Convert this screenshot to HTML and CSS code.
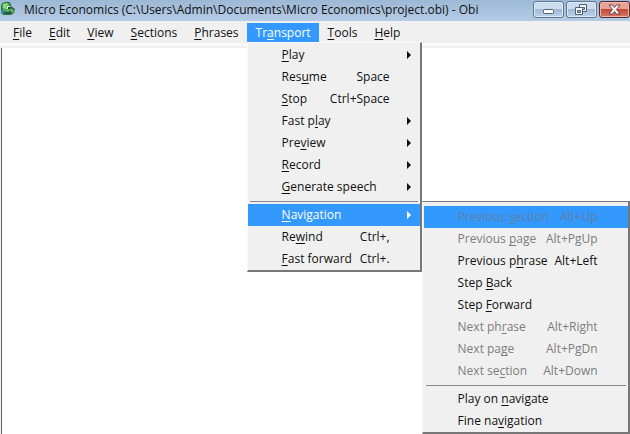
FILE: index.html
```html
<!DOCTYPE html>
<html lang="en">
<head>
<meta charset="utf-8">
<title>Micro Economics - Obi</title>
<link rel="stylesheet" href="styles.css">
</head>
<body>
<div class="window">
  <header class="titlebar">
    <svg class="app-icon" viewBox="0 0 16 16" aria-hidden="true">
      <path fill="#2d7048" d="M1 6Q2 2 6 2Q11 1 11 6L15 9L14 13L11 15H3L1 13Z"/>
      <path fill="#4fb15c" d="M2 6Q3 3 7 3Q10 3 10 7L11 11Q7 13 3 11Z"/>
      <path fill="#8ddc75" d="M3 4L7 3L8 5L6 6L7 9L3 8Z"/>
      <path fill="#e5f7f8" d="M7 6H10V9H7Z"/>
      <path fill="#163f49" d="M8 7H10V9H8ZM4 11Q8 14 11 11V12Q8 15 4 12Z"/>
      <path fill="#3b8a9b" d="M1 10L5 12L3 14L1 13Z"/>
      <path fill="#72b45a" d="M11 9L14 10L13 13L11 12Z"/>
    </svg>
    <h1 class="title">Micro Economics (C:\Users\Admin\Documents\Micro Economics\project.obi) - Obi</h1>
    <div class="controls">
      <button class="control" type="button" aria-label="Minimize">
        <svg viewBox="0 0 30 16" aria-hidden="true"><rect x="9.500" y="7.500" width="10" height="4" rx="1" fill="#fff" stroke="#51606f"/></svg>
      </button>
      <button class="control" type="button" aria-label="Restore">
        <svg viewBox="0 0 30 16" aria-hidden="true"><g fill="#f4f8fc" stroke="#51606f"><path d="M12.500 2.500H19.500V9.500H12.500Z"/><path d="M8.500 5.500H15.500V12.500H8.500Z"/><path fill="#a9c1dc" d="M10.500 8.500H13.500V10.500H10.500ZM15.500 5.500H17.500V7.500H15.500"/></g></svg>
      </button>
      <button class="control control-close" type="button" aria-label="Close">
        <svg viewBox="0 0 30 16" aria-hidden="true"><path d="M9 3H12.500L14.500 5.500L16.500 3H20L16.500 7.500L20 12H16.500L14.500 9.500L12.500 12H9L12.500 7.500Z" fill="#fff" stroke="#6b4450"/></svg>
      </button>
    </div>
  </header>
  <nav class="menubar">
    <button class="top-item" type="button"><u>F</u>ile</button>
    <button class="top-item" type="button"><u>E</u>dit</button>
    <button class="top-item" type="button"><u>V</u>iew</button>
    <button class="top-item" type="button"><u>S</u>ections</button>
    <button class="top-item" type="button"><u>P</u>hrases</button>
    <div class="top-group">
      <button class="top-item top-open" type="button" aria-expanded="true">Tr<u>a</u>nsport</button>
      <div class="menu menu-transport">
        <button class="item has-sub" type="button"><span><u>P</u>lay</span></button>
        <button class="item" type="button"><span>Res<u>u</u>me</span><span>Space</span></button>
        <button class="item" type="button"><span><u>S</u>top</span><span>Ctrl+Space</span></button>
        <button class="item has-sub" type="button"><span>Fast p<u>l</u>ay</span></button>
        <button class="item has-sub" type="button"><span>Pre<u>v</u>iew</span></button>
        <button class="item has-sub" type="button"><span><u>R</u>ecord</span></button>
        <button class="item has-sub" type="button"><span><u>G</u>enerate speech</span></button>
        <hr class="separator">
        <div class="sub-group">
          <button class="item has-sub selected" type="button" aria-expanded="true"><span><u>N</u>avigation</span></button>
          <div class="menu menu-navigation">
            <button class="item selected" type="button" disabled><span>Previous <u>s</u>ection</span><span>Alt+Up</span></button>
            <button class="item" type="button" disabled><span>Previous <u>p</u>age</span><span>Alt+PgUp</span></button>
            <button class="item" type="button"><span>Previous p<u>h</u>rase</span><span>Alt+Left</span></button>
            <button class="item" type="button"><span>Step <u>B</u>ack</span></button>
            <button class="item" type="button"><span>Step <u>F</u>orward</span></button>
            <button class="item" type="button" disabled><span>Next ph<u>r</u>ase</span><span>Alt+Right</span></button>
            <button class="item" type="button" disabled><span>Next pa<u>g</u>e</span><span>Alt+PgDn</span></button>
            <button class="item" type="button" disabled><span>Next se<u>c</u>tion</span><span>Alt+Down</span></button>
            <hr class="separator">
            <button class="item" type="button"><span>Play on <u>n</u>avigate</span></button>
            <button class="item" type="button"><span>Fine na<u>v</u>igation</span></button>
          </div>
        </div>
        <button class="item" type="button"><span>Re<u>w</u>ind</span><span>Ctrl+,</span></button>
        <button class="item" type="button"><span><u>F</u>ast forward</span><span>Ctrl+.</span></button>
      </div>
    </div>
    <button class="top-item" type="button"><u>T</u>ools</button>
    <button class="top-item" type="button"><u>H</u>elp</button>
  </nav>
  <main class="workspace"></main>
</div>
</body>
</html>
```
FILE: styles.css
```css
* { box-sizing: border-box; }

body {
  margin: 0;
  overflow: hidden;
  font: 12px/16px "Open Sans", "Noto Sans", sans-serif;
  color: #111;
  background: #f0f0f0;
}

button {
  margin: 0;
  padding: 0;
  border: 0;
  font: inherit;
  color: inherit;
  background: none;
}

u { text-underline-offset: 2px; text-decoration-skip-ink: none; }

.window {
  display: flex;
  flex-direction: column;
  min-height: 100vh;
}

.titlebar {
  display: flex;
  align-items: flex-start;
  height: 21px;
  background: linear-gradient(#9db8d5, #b5cce5);
}

.app-icon { width: 16px; height: 16px; flex: none; }

.title {
  flex: 1;
  margin: 0 0 0 8px;
  padding-top: 2px;
  font-size: 12px;
  line-height: 16px;
  font-weight: 400;
  white-space: nowrap;
}

.controls { display: flex; gap: 2px; padding-top: 1px; }

.control {
  width: 31px;
  height: 17px;
  border: 1px solid #63788f;
  border-radius: 3px;
  background: linear-gradient(#cbdcee 45%, #a1b9d4 50%, #bcd3ea);
  box-shadow: inset 0 0 0 1px #dce9f6;
}

.control svg { display: block; width: 30px; height: 16px; }

.control-close {
  border-color: #572733;
  background: linear-gradient(#e6a295 45%, #c24a37 50%, #d77864);
  box-shadow: inset 0 0 0 1px #edb6ab;
}

.menubar {
  display: flex;
  height: 25px;
  padding: 2px 0 0 4px;
  border-bottom: 3px solid #fafafa;
}

.top-item { height: 19px; padding: 0 8px 0 9px; white-space: nowrap; }
.top-open { color: #fff; background: #3399ff; }
.top-group { position: relative; }

.menu {
  position: absolute;
  z-index: 1;
  background: #f0f0f0;
  border: 1px solid #fafafa;
  border-right: 2px solid #777;
  border-bottom: 2px solid #777;
}

.menu-transport { top: 19px; left: 0; width: 175px; padding-top: 1px; }

.menu-navigation {
  top: -3px;
  left: 174px;
  width: 208px;
  border-top-color: #777;
  padding: 4px 0 0 1px;
}

.item {
  display: flex;
  justify-content: space-between;
  align-items: center;
  position: relative;
  width: 100%;
  height: 22px;
  padding: 0 30px 0 34px;
  white-space: nowrap;
}

.item:disabled { color: #7d7d7d; }
.selected { color: #fff; background: #3399ff; }
.selected:disabled { color: #5f7f9f; }

.has-sub::after {
  content: "";
  position: absolute;
  right: 9px;
  top: 7px;
  border: 4px solid transparent;
  border-left-color: currentColor;
  border-right: 0;
}

.sub-group { position: relative; }

.separator {
  height: 1px;
  margin: 3px 2px 2px;
  border: 0;
  background: #888;
}

.workspace {
  flex: 1;
  margin: 2px 0 0 1px;
  background: #fff;
  border-left: 1px solid #666;
}
```
